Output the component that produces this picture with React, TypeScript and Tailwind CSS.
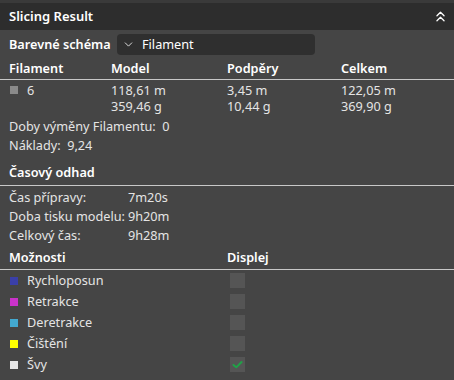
import { ChevronDown, ChevronsUp } from "lucide-react";

const legend = [
  { name: "Rychloposun", color: "bg-[#3a3fa8]", checked: false },
  { name: "Retrakce", color: "bg-[#c932c9]", checked: false },
  { name: "Deretrakce", color: "bg-[#43a9d0]", checked: false },
  { name: "Čištění", color: "bg-[#ffff00]", checked: false },
  { name: "Švy", color: "bg-[#e6e6e6]", checked: true },
];

const times = [
  ["Čas přípravy:", "7m20s"],
  ["Doba tisku modelu:", "9h20m"],
  ["Celkový čas:", "9h28m"],
];

export default function App() {
  return (
    <div
      className="w-[454px] h-[380px] bg-[#454545] text-[#e4e4e4] text-[12.7px] leading-[19px] overflow-hidden"
      style={{ fontFamily: '"Noto Sans", sans-serif' }}
    >
      {/* Title bar */}
      <div className="h-[3px] bg-[#3a3a3a]" />
      <div className="h-[27px] bg-[#2d2d2d] flex items-center justify-between pl-[9px] pr-[5px]">
        <span className="font-semibold text-white text-[13px]">Slicing Result</span>
        <ChevronsUp className="h-[17px] w-[17px] text-white" strokeWidth={1.8} />
      </div>

      {/* Colour scheme */}
      <div className="flex items-center h-[29px] pl-[9px]">
        <span className="font-semibold text-white w-[108px]">Barevné schéma</span>
        <div className="flex items-center h-[21px] w-[198px] bg-[#2f2f2f] rounded-[4px] pl-[5px] gap-[7px] text-white">
          <ChevronDown className="h-[13px] w-[13px]" strokeWidth={1.5} />
          <span>Filament</span>
        </div>
      </div>

      {/* Filament table */}
      <div className="flex items-center h-[18px] pl-[9px] font-semibold text-white">
        <span className="w-[102px]">Filament</span>
        <span className="w-[116px]">Model</span>
        <span className="w-[114px]">Podpěry</span>
        <span>Celkem</span>
      </div>
      <div className="h-px bg-[#c8c8c8] mt-[2px]" />
      <div className="flex pl-[9px] pt-[1px] leading-[16px]">
        <div className="w-[102px] flex items-start pt-[1px]">
          <span className="w-[8px] h-[8px] bg-[#8a8a8a] mt-[4px] ml-[1px] mr-[9px]" />
          <span>6</span>
        </div>
        <div className="w-[116px] flex flex-col pt-[1px]">
          <span>118,61 m</span>
          <span>359,46 g</span>
        </div>
        <div className="w-[114px] flex flex-col pt-[1px]">
          <span>3,45 m</span>
          <span>10,44 g</span>
        </div>
        <div className="flex flex-col pt-[1px]">
          <span>122,05 m</span>
          <span>369,90 g</span>
        </div>
      </div>

      <div className="pl-[9px] pt-[3px] flex flex-col">
        <div className="h-[19px]">Doby výměny Filamentu:&nbsp; 0</div>
        <div className="h-[19px]">Náklady:&nbsp; 9,24</div>
      </div>

      {/* Time estimate */}
      <div className="pl-[9px] mt-[8px] h-[19px] font-semibold text-white">Časový odhad</div>
      <div className="h-px bg-[#c8c8c8] mt-[3px]" />
      <div className="pl-[9px] pt-[2px] flex flex-col">
        {times.map(([label, value]) => (
          <div key={label} className="flex h-[19px] items-center">
            <span className="w-[119px]">{label}</span>
            <span>{value}</span>
          </div>
        ))}
      </div>

      {/* Options */}
      <div className="flex items-center h-[19px] mt-[3px] pl-[9px] font-semibold text-white">
        <span className="w-[218px]">Možnosti</span>
        <span>Displej</span>
      </div>
      <div className="h-px bg-[#c8c8c8] mt-[2px]" />
      <div className="pl-[9px] flex flex-col">
        {legend.map((item) => (
          <div key={item.name} className="flex items-center h-[21px]">
            <span className={`w-[8px] h-[8px] ml-[1px] mr-[9px] ${item.color}`} />
            <span className="w-[203px]">{item.name}</span>
            <span className="w-[15px] h-[15px] bg-[#555555] flex items-center justify-center">
              {item.checked && (
                <svg viewBox="0 0 16 16" className="w-[13px] h-[13px]">
                  <path
                    d="M3 8.5 L6.5 11.5 L13 5"
                    fill="none"
                    stroke="#1fa347"
                    strokeWidth="2.4"
                    strokeLinecap="round"
                    strokeLinejoin="round"
                  />
                </svg>
              )}
            </span>
          </div>
        ))}
      </div>
    </div>
  );
}
